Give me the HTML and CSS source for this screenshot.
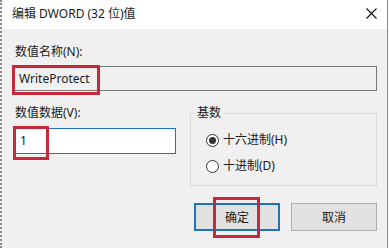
FILE: index.html
```html
<!DOCTYPE html>
<html lang="zh-CN">
  <head>
    <meta charset="utf-8" />
    <title>编辑 DWORD (32 位)值</title>
    <link rel="stylesheet" href="styles.css">
  </head>
  <body>
    <div class="dialog">
      <!-- title bar -->
      <div class="titlebar">
        <span class="title">编辑 DWORD (32 位)值</span>
        <svg class="close" width="11" height="11" viewBox="0 0 11 11">
          <path d="M0.5 0.5 L10.5 10.5 M10.5 0.5 L0.5 10.5" stroke="#111" stroke-width="1.1" fill="none"/>
        </svg>
      </div>

      <div class="content">
        <div class="lbl">数值名称(N):</div>
        <div class="field readonly">
          WriteProtect
          <span class="mark mark-name"></span>
        </div>

        <div class="row">
          <div class="col-data">
            <div class="lbl lbl-data">数值数据(V):</div>
            <div class="field edit">
              1
              <span class="mark mark-value"></span>
            </div>
          </div>

          <div class="group">
            <span class="legend">基数</span>
            <label class="radio"><span class="dot checked"></span>十六进制(H)</label>
            <label class="radio"><span class="dot"></span>十进制(D)</label>
          </div>
        </div>

        <div class="buttons">
          <div class="btn default">
            确定
            <span class="mark mark-ok"></span>
          </div>
          <div class="btn">取消</div>
        </div>
      </div>
    </div>
  </body>
</html>
```

FILE: styles.css
```css
html, body {
  margin: 0;
  padding: 0;
}

body {
  width: 389px;
  height: 248px;
  overflow: hidden;
  font-family: "Noto Sans", "Noto Sans CJK SC", sans-serif;
  font-size: 12px;
  color: #1a1a1a;
}

.dialog {
  height: 248px;
  box-sizing: border-box;
  background-color: #f0f0f0;
  border-left: 2px dotted #8a8a8a;
  border-right: 1px solid #8c8c8c;
  width: 388px;
}

.titlebar {
  height: 29px;
  background-color: #fff;
  display: flex;
  align-items: center;
  justify-content: space-between;
  padding: 0 10px 0 10px;
}

.title {
  font-size: 12px;
  line-height: 16px;
  margin-top: -1px;
}

.close {
  margin-top: -2px;
}

.content {
  padding: 15px 9px 0 10px;
}

.lbl {
  line-height: 16px;
  padding-left: 3px;
}

.field {
  position: relative;
  box-sizing: border-box;
  height: 25px;
  line-height: 23px;
  padding-left: 6px;
  margin-top: 6px;
}

.readonly {
  border: 1px solid #7a7a7a;
  background-color: #f0f0f0;
  width: 365px;
}

.edit {
  border: 1px solid #1e73be;
  background-color: #fff;
  width: 163px;
  height: 26px;
  margin-top: 7px;
  margin-left: 1px;
}

.row {
  display: flex;
  margin-top: 14px;
}

.col-data {
  width: 178px;
}

.group {
  position: relative;
  box-sizing: border-box;
  width: 187px;
  height: 73px;
  margin-top: 8px;
  border: 1px solid #d9d9d9;
  padding: 18px 0 0 15px;
  display: flex;
  flex-direction: column;
  gap: 10px;
}

.legend {
  position: absolute;
  top: -9px;
  left: 4px;
  background-color: #f0f0f0;
  padding: 0 2px;
  line-height: 16px;
}

.radio {
  display: flex;
  align-items: center;
  line-height: 16px;
}

.dot {
  box-sizing: border-box;
  width: 13px;
  height: 13px;
  border: 1px solid #333;
  border-radius: 50%;
  background-color: #fff;
  margin-right: 4px;
  display: flex;
  align-items: center;
  justify-content: center;
}

.dot.checked::after {
  content: "";
  width: 7px;
  height: 7px;
  border-radius: 50%;
  background-color: #333;
}

.buttons {
  display: flex;
  justify-content: flex-end;
  gap: 11px;
  margin-top: 17px;
  padding-right: 1px;
}

.btn {
  position: relative;
  box-sizing: border-box;
  width: 86px;
  height: 28px;
  border: 1px solid #adadad;
  background-color: #e1e1e1;
  display: flex;
  align-items: center;
  justify-content: center;
}

.btn.default {
  border: 2px solid #1e73be;
}

/* red annotation boxes drawn over the dialog */
.mark {
  position: absolute;
  box-sizing: border-box;
  border: 3px solid #c8283a;
}

.mark-name {
  left: -1px;
  top: -2px;
  width: 88px;
  height: 30px;
}

.mark-value {
  left: -1px;
  top: -3px;
  width: 36px;
  height: 34px;
}

.mark-ok {
  left: 17px;
  top: -8px;
  width: 47px;
  height: 41px;
}
```
